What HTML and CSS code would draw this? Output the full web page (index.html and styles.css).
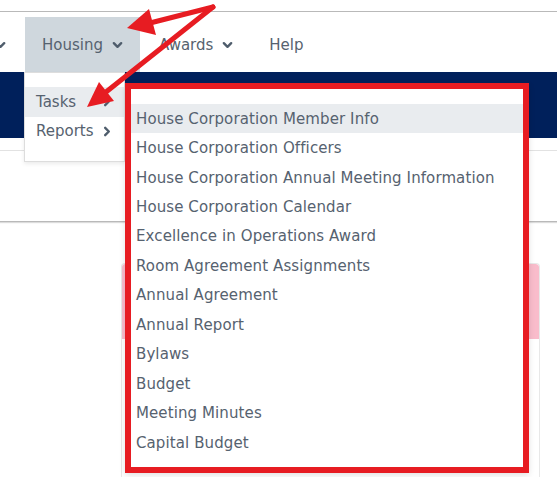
FILE: index.html
```html
<!DOCTYPE html>
<html>
<head>
<meta charset="utf-8">
<link rel="stylesheet" href="styles.css">
</head>
<body>
<div class="topstrip"></div>
<nav class="navbar">
  <span class="nav-item nav-cut"><svg class="chev" viewBox="0 0 12 8"><path d="M2 2 L6 6 L10 2"/></svg></span>
  <span class="nav-item active">Housing<svg class="chev" viewBox="0 0 12 8"><path d="M2 2 L6 6 L10 2"/></svg></span>
  <span class="nav-item">Awards<svg class="chev" viewBox="0 0 12 8"><path d="M2 2 L6 6 L10 2"/></svg></span>
  <span class="nav-item">Help</span>
</nav>
<div class="brandbar"></div>
<div class="subbar"><div class="subline"></div></div>
<main class="content">
  <div class="card">
    <div class="alert"></div>
    <div class="card-body"><span class="time">17 - 8:00PM</span></div>
  </div>
</main>

<div class="menu">
  <div class="menu-row hover">Tasks<svg class="chev-r" viewBox="0 0 8 12"><path d="M2 2 L6 6 L2 10"/></svg></div>
  <div class="menu-row">Reports<svg class="chev-r" viewBox="0 0 8 12"><path d="M2 2 L6 6 L2 10"/></svg></div>
</div>

<div class="submenu">
  <div class="sub-item hover">House Corporation Member Info</div>
  <div class="sub-item">House Corporation Officers</div>
  <div class="sub-item">House Corporation Annual Meeting Information</div>
  <div class="sub-item">House Corporation Calendar</div>
  <div class="sub-item">Excellence in Operations Award</div>
  <div class="sub-item">Room Agreement Assignments</div>
  <div class="sub-item">Annual Agreement</div>
  <div class="sub-item">Annual Report</div>
  <div class="sub-item">Bylaws</div>
  <div class="sub-item">Budget</div>
  <div class="sub-item">Meeting Minutes</div>
  <div class="sub-item">Capital Budget</div>
</div>

<svg class="annot" viewBox="0 0 557 477" width="557" height="477">
  <line x1="213" y1="7" x2="150" y2="23" class="shaft"/>
  <polygon points="127,28 149,9 156,35" class="head"/>
  <line x1="213" y1="7" x2="106" y2="92" class="shaft"/>
  <polygon points="87,107 99,82 114,101" class="head"/>
</svg>
</body>
</html>
```

FILE: styles.css
```css
html, body {
  margin: 0;
  padding: 0;
  background: #ffffff;
  width: 557px;
  height: 477px;
  overflow: hidden;
  font-family: "DejaVu Sans", "Liberation Sans", sans-serif;
  color: #56626f;
}

.topstrip {
  height: 11px;
  background: #ffffff;
  border-bottom: 1px solid #b9b9b9;
  box-shadow: 0 1px 1px #dcdcdc;
}

.navbar {
  height: 60px;
  display: flex;
  align-items: flex-end;
  gap: 2px;
  background: #ffffff;
}

.nav-item {
  height: 55px;
  display: flex;
  align-items: center;
  padding: 0 17px;
  font-size: 15px;
  color: #56626f;
  box-sizing: border-box;
}

.nav-item .chev {
  margin-left: 9px;
}

.nav-cut {
  padding-left: 0;
  margin-left: -5px;
}

.nav-cut .chev {
  margin-left: 0;
}

.nav-item.active {
  background: #cfd7dd;
}

.chev {
  width: 11px;
  height: 8px;
  fill: none;
  stroke: #4f5d6c;
  stroke-width: 2.6;
  stroke-linecap: round;
  stroke-linejoin: round;
  margin-top: 1px;
}

.brandbar {
  height: 66px;
  background: #00205b;
}

.subbar {
  height: 71px;
  border-bottom: 1px solid #b9b9b9;
  box-shadow: 0 1px 1px #dcdcdc;
  padding-top: 12px;
  box-sizing: content-box;
}

.subline {
  border-top: 1px solid #e2e2e2;
}

.content {
  padding-top: 41px;
  padding-left: 121px;
}

.card {
  width: 419px;
  height: 224px;
  overflow: hidden;
  border: 1px solid #e8e8e8;
  border-bottom: none;
  border-radius: 4px 4px 0 0;
  box-sizing: border-box;
}

.alert {
  height: 75px;
  background: #f9bccb;
  border-radius: 3px 3px 0 0;
}

.card-body {
  padding: 138px 0 0 59px;
  font-size: 15px;
  color: #555555;
}

.menu {
  position: absolute;
  left: 24px;
  top: 72px;
  width: 101px;
  box-sizing: border-box;
  background: #ffffff;
  border: 1px solid #dddddd;
  box-shadow: 0 2px 4px rgba(0, 0, 0, 0.08);
  padding: 14px 0 15px;
}

.menu-row {
  height: 29.5px;
  display: flex;
  align-items: center;
  justify-content: space-between;
  padding: 0 13px 0 11px;
  font-size: 15px;
}

.menu-row.hover {
  background: #e9ecef;
}

.chev-r {
  width: 8px;
  height: 11px;
  fill: none;
  stroke: #4f5d6c;
  stroke-width: 2.6;
  stroke-linecap: round;
  stroke-linejoin: round;
}

.submenu {
  position: absolute;
  left: 125px;
  top: 83px;
  width: 404px;
  height: 390px;
  box-sizing: border-box;
  border: 6px solid #e71c22;
  background: #ffffff;
  padding-top: 15px;
  box-shadow: 0 2px 6px rgba(0, 0, 0, 0.12);
}

.sub-item {
  height: 29.45px;
  display: flex;
  align-items: center;
  padding-left: 5px;
  font-size: 15px;
  letter-spacing: 0.1px;
  white-space: nowrap;
}

.sub-item.hover {
  background: #e9ecef;
}

.annot {
  position: absolute;
  left: 0;
  top: 0;
  pointer-events: none;
}

.shaft {
  stroke: #e71c22;
  stroke-width: 5;
  stroke-linecap: round;
}

.head {
  fill: #e71c22;
}
```
